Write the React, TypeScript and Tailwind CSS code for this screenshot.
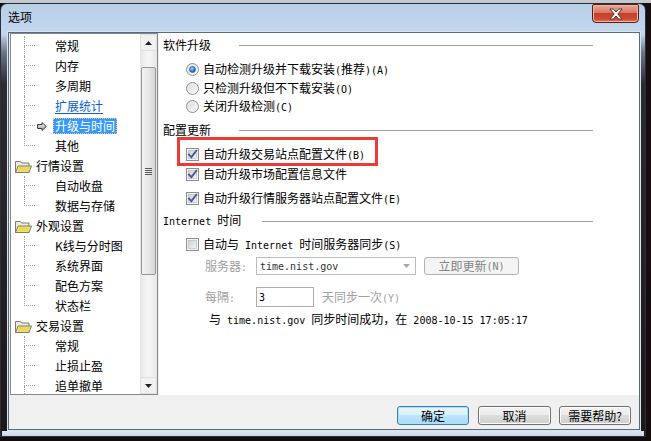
import React from "react";

const M = "font-['DejaVu_Sans_Mono'] text-[10px]";

function Folder() {
  return (
    <svg width="17" height="13" viewBox="0 0 17 13" className="shrink-0">
      <path d="M0.5 1.5h5l1.2 1.5h7.3v9.5H0.5z" fill="#ecebe0" stroke="#7d7d6c" />
      <path d="M0.5 12.5l2.6-6.5h13.4l-2.6 6.5z" fill="#f4e46e" stroke="#7d7d6c" />
      <path d="M4 8h10M3.4 10h10" stroke="#d8c440" strokeWidth="0.8" />
    </svg>
  );
}

function Arrow() {
  return (
    <svg width="10" height="9" viewBox="0 0 10 9" className="shrink-0">
      <defs>
        <linearGradient id="arrg" x1="0" y1="0" x2="0" y2="1">
          <stop offset="0" stopColor="#f4f4f4" />
          <stop offset="1" stopColor="#9a9a9a" />
        </linearGradient>
      </defs>
      <path d="M0.5 2.5h4.5v-2l4.3 4-4.3 4v-2h-4.5z" fill="url(#arrg)" stroke="#3c3c3c" />
    </svg>
  );
}

function Radio({ checked, id }: { checked?: boolean; id: string }) {
  return (
    <svg width="13" height="13" viewBox="0 0 13 13" className="shrink-0">
      <defs>
        <linearGradient id={`rb${id}`} x1="0" y1="0" x2="1" y2="1">
          <stop offset="0" stopColor="#d6d6d6" />
          <stop offset="1" stopColor="#fdfdfd" />
        </linearGradient>
        <radialGradient id={`rd${id}`} cx="0.4" cy="0.35" r="0.7">
          <stop offset="0" stopColor="#b5ddfb" />
          <stop offset="0.5" stopColor="#3d8ee0" />
          <stop offset="1" stopColor="#12539e" />
        </radialGradient>
      </defs>
      <circle cx="6.5" cy="6.5" r="6" fill={`url(#rb${id})`} stroke="#8e8f8f" />
      <circle cx="6.5" cy="6.5" r="4.5" fill="none" stroke="#f4f4f4" strokeWidth="0.8" />
      {checked && <circle cx="6.5" cy="6.5" r="3" fill={`url(#rd${id})`} stroke="#1b4f8e" strokeWidth="0.6" />}
    </svg>
  );
}

function Check({ checked, id }: { checked?: boolean; id: string }) {
  return (
    <svg width="13" height="13" viewBox="0 0 13 13" className="shrink-0">
      <defs>
        <linearGradient id={`cb${id}`} x1="0" y1="0" x2="1" y2="1">
          <stop offset="0" stopColor="#cbcfd5" />
          <stop offset="1" stopColor="#f6f6f6" />
        </linearGradient>
      </defs>
      <rect x="0.5" y="0.5" width="12" height="12" fill="#f4f4f4" stroke="#8e8f8f" />
      <rect x="2.5" y="2.5" width="8" height="8" fill={`url(#cb${id})`} stroke="#b5b9bf" strokeWidth="0.6" />
      {checked && (
        <path d="M3 6.6 L5.4 9.2 L10.3 2.8" fill="none" stroke="#4a5a94" strokeWidth="1.9" strokeLinecap="square" />
      )}
    </svg>
  );
}

type TreeItem = {
  label: string;
  kind: "parent" | "child";
  last?: boolean;
  selected?: boolean;
  link?: boolean;
};

const tree: TreeItem[] = [
  { label: "常规", kind: "child" },
  { label: "内存", kind: "child" },
  { label: "多周期", kind: "child" },
  { label: "扩展统计", kind: "child", link: true },
  { label: "升级与时间", kind: "child", selected: true },
  { label: "其他", kind: "child", last: true },
  { label: "行情设置", kind: "parent" },
  { label: "自动收盘", kind: "child" },
  { label: "数据与存储", kind: "child", last: true },
  { label: "外观设置", kind: "parent" },
  { label: "K线与分时图", kind: "child" },
  { label: "系统界面", kind: "child" },
  { label: "配色方案", kind: "child" },
  { label: "状态栏", kind: "child", last: true },
  { label: "交易设置", kind: "parent" },
  { label: "常规", kind: "child" },
  { label: "止损止盈", kind: "child" },
  { label: "追单撤单", kind: "child" },
];

function TreeRow({ item }: { item: TreeItem }) {
  if (item.kind === "parent") {
    return (
      <div className="flex h-[20px] shrink-0 items-center pl-[4px]">
        <Folder />
        <span className="ml-[4px] leading-[20px] text-black">{item.label}</span>
      </div>
    );
  }
  return (
    <div className="flex h-[20px] shrink-0">
      <div className="w-[13px] shrink-0" />
      <div className="flex w-[11px] shrink-0 flex-col">
        <div className="h-[10px] border-b border-l border-dotted border-[#a0a0a0]" />
        <div className={item.last ? "h-[10px]" : "h-[10px] border-l border-dotted border-[#a0a0a0]"} />
      </div>
      <div className="flex w-[18px] shrink-0 items-center pl-[2px]">{item.selected && <Arrow />}</div>
      <div className="flex items-center">
        {item.selected ? (
          <span className="h-[16px] border border-dotted border-[#f3c26a] bg-[#3399ff] px-[1px] leading-[14px] text-white">
            {item.label}
          </span>
        ) : (
          <span
            className={
              item.link
                ? "border border-transparent px-[1px] leading-[20px] text-[#0a5ed1] underline underline-offset-2"
                : "border border-transparent px-[1px] leading-[20px] text-black"
            }
          >
            {item.label}
          </span>
        )}
      </div>
    </div>
  );
}

function ScrollBar() {
  return (
    <div className="flex w-[17px] shrink-0 flex-col bg-[linear-gradient(to_right,#e6e6e6,#f4f4f4_40%,#f4f4f4_60%,#e6e6e6)]">
      <div className="flex h-[17px] shrink-0 items-center justify-center rounded-[2px] border border-[#e0e0e0] bg-[#f1f1f1]">
        <svg width="7" height="4" viewBox="0 0 7 4">
          <path d="M0 4 L3.5 0 L7 4z" fill="#222" />
        </svg>
      </div>
      <div className="h-[16px] shrink-0" />
      <div className="mx-[1px] flex h-[208px] shrink-0 flex-col items-center justify-center rounded-[2px] border border-[#979797] bg-[linear-gradient(to_right,#f3f3f3,#e8e8e8_50%,#d6d6d6)]">
        <div className="flex flex-col gap-[1px]">
          <div className="h-px w-[7px] bg-[#5a5a5a]" />
          <div className="h-px w-[7px] bg-[#5a5a5a]" />
          <div className="h-px w-[7px] bg-[#5a5a5a]" />
          <div className="h-px w-[7px] bg-[#5a5a5a]" />
        </div>
      </div>
      <div className="flex-1" />
      <div className="flex h-[17px] shrink-0 items-center justify-center rounded-[2px] border border-[#e0e0e0] bg-[#f1f1f1]">
        <svg width="7" height="4" viewBox="0 0 7 4">
          <path d="M0 0 L3.5 4 L7 0z" fill="#222" />
        </svg>
      </div>
    </div>
  );
}

function Header({ children, gap }: { children: React.ReactNode; gap: string }) {
  return (
    <div className="flex h-[20px] shrink-0 items-center pl-[4px]">
      <span className="whitespace-nowrap leading-[20px] text-black">{children}</span>
      <div className={`${gap} mr-[46px] h-px flex-1 bg-[#a0a0a0]`} />
    </div>
  );
}

function WinButton({ children, primary, w }: { children: React.ReactNode; primary?: boolean; w: string }) {
  return (
    <div
      className={
        primary
          ? `${w} flex h-[19px] items-center justify-center rounded-[3px] border border-[#3c7fb1] bg-[linear-gradient(to_bottom,#eaf6fd,#d9f0fc_50%,#bee6fd_50%,#a7d9f5)] text-black shadow-[inset_0_0_0_1px_#a8e2fa]`
          : `${w} flex h-[19px] items-center justify-center rounded-[3px] border border-[#707070] bg-[linear-gradient(to_bottom,#f2f2f2,#ebebeb_50%,#dddddd_50%,#cfcfcf)] text-black shadow-[inset_0_0_0_1px_#fcfcfc]`
      }
    >
      {children}
    </div>
  );
}

export default function App() {
  return (
    <div className="h-[441px] w-[651px] overflow-hidden bg-[linear-gradient(to_bottom,#c4c9d0_0px,#c4c9d0_3px,#170d0f_3px,#140b0d_100%)] font-['Noto_Sans_CJK_SC',sans-serif] text-[12px]">
      <div className="mt-[3px] flex h-[434px] w-[646px] flex-col rounded-t-[7px] border border-[#27303c] bg-[linear-gradient(to_bottom,#b8cfe8_0px,#c3d7ee_30px,#6d7685_48px,#2d2a30_80px,#1d1719_100%)]">
        {/* title bar */}
        <div className="flex h-[28px] shrink-0 items-start">
          <span className="ml-[7px] mt-[3px] leading-[20px] text-black">选项</span>
          <div className="ml-auto mr-[6px] flex h-[19px] w-[47px] items-center justify-center rounded-b-[4px] rounded-t-[2px] border border-[#5a1b12] bg-[linear-gradient(to_bottom,#e9a899,#d67a63_45%,#c3402a_50%,#cf4a30_80%,#e07050)] shadow-[inset_0_0_0_1px_#eeb8a8]">
            <svg width="14" height="12" viewBox="0 0 14 12">
              <path
                d="M1 1 H4.5 L7 4 L9.5 1 H13 L8.8 6 L13 11 H9.5 L7 8 L4.5 11 H1 L5.2 6 Z"
                fill="#ffffff"
                stroke="#4a2a26"
                strokeWidth="0.9"
                strokeLinejoin="round"
              />
            </svg>
          </div>
        </div>

        {/* client */}
        <div className="ml-[7px] flex h-[398px] w-[632px] shrink-0 flex-col border border-[#596a80] bg-[#f0f0f0] shadow-[0_0_0_1px_#d9e4ef]">
          <div className="flex h-[362px] shrink-0">
            {/* tree */}
            <div className="ml-[1px] flex h-[362px] w-[148px] shrink-0 border border-[#828790] bg-white">
              <div className="flex flex-1 flex-col overflow-hidden pt-[2px]">
                {tree.map((it, i) => (
                  <TreeRow key={i} item={it} />
                ))}
              </div>
              <ScrollBar />
            </div>
            {/* right pane */}
            <div className="relative ml-[1px] flex w-[480px] shrink-0 flex-col bg-white">
              <div className="mt-[2px]">
                <Header gap="ml-[28px]">软件升级</Header>
              </div>
              <div className="mt-[5px] flex h-[18px] shrink-0 items-center pl-[27px]">
                <Radio checked id="1" />
                <span className="ml-[4px] whitespace-nowrap">
                  自动检测升级并下载安装<span className={M}>(</span>推荐<span className={M}>)(A)</span>
                </span>
              </div>
              <div className="mt-[1px] flex h-[18px] shrink-0 items-center pl-[27px]">
                <Radio id="2" />
                <span className="ml-[4px] whitespace-nowrap">
                  只检测升级但不下载安装<span className={M}>(O)</span>
                </span>
              </div>
              <div className="flex h-[18px] shrink-0 items-center pl-[27px]">
                <Radio id="3" />
                <span className="ml-[4px] whitespace-nowrap">
                  关闭升级检测<span className={M}>(C)</span>
                </span>
              </div>

              <div className="mt-[5px]">
                <Header gap="ml-[28px]">配置更新</Header>
              </div>
              <div className="mt-[5px] flex h-[18px] shrink-0 items-center pl-[27px]">
                <Check checked id="1" />
                <span className="ml-[4px] whitespace-nowrap">
                  自动升级交易站点配置文件<span className={M}>(B)</span>
                </span>
              </div>
              <div className="mt-[2px] flex h-[18px] shrink-0 items-center pl-[27px]">
                <Check checked id="2" />
                <span className="ml-[4px] whitespace-nowrap">自动升级市场配置信息文件</span>
              </div>
              <div className="mt-[6px] flex h-[18px] shrink-0 items-center pl-[27px]">
                <Check checked id="3" />
                <span className="ml-[4px] whitespace-nowrap">
                  自动升级行情服务器站点配置文件<span className={M}>(E)</span>
                </span>
              </div>

              <div className="mt-[4px]">
                <Header gap="ml-[21px]">
                  <span className={M}>Internet </span>时间
                </Header>
              </div>
              <div className="mt-[4px] flex h-[18px] shrink-0 items-center pl-[27px]">
                <Check id="4" />
                <span className="ml-[4px] whitespace-nowrap">
                  自动与<span className={M}> Internet </span>时间服务器同步<span className={M}>(S)</span>
                </span>
              </div>
              <div className="mt-[4px] flex h-[18px] shrink-0 items-center pl-[46px]">
                <span className="w-[51px] shrink-0 text-[#a0a0a0]">
                  服务器<span className={M}>:</span>
                </span>
                <div className="flex h-[18px] w-[160px] shrink-0 items-center border border-[#bcbcbc] bg-white pl-[3px] pr-[5px]">
                  <span className={`${M} text-[#333]`}>time.nist.gov</span>
                  <svg width="7" height="4" viewBox="0 0 7 4" className="ml-auto">
                    <path d="M0 0 L3.5 4 L7 0z" fill="#a8a8a8" />
                  </svg>
                </div>
                <div className="ml-[8px] flex h-[18px] w-[95px] shrink-0 items-center justify-center rounded-[3px] border border-[#adb2b5] bg-[#f4f4f4] text-[#838383]">
                  立即更新<span className={M}>(N)</span>
                </div>
              </div>
              <div className="mt-[12px] flex h-[20px] shrink-0 items-center pl-[46px]">
                <span className="w-[51px] shrink-0 text-[#a0a0a0]">
                  每隔<span className={M}>:</span>
                </span>
                <div className="flex h-[20px] w-[58px] shrink-0 items-center border border-[#abadb3] bg-white pl-[2px]">
                  <span className={`${M} text-black`}>3</span>
                </div>
                <span className="ml-[8px] whitespace-nowrap text-[#a0a0a0]">
                  天同步一次<span className={M}>(Y)</span>
                </span>
              </div>
              <div className="mt-[3px] flex h-[18px] shrink-0 items-center pl-[50px]">
                <span className="whitespace-nowrap text-black">
                  与<span className={M}> time.nist.gov </span>同步时间成功，在<span className={M}> 2008-10-15 17:05:17</span>
                </span>
              </div>

              {/* red annotation box */}
              <div className="absolute left-[18px] top-[104px] h-[29px] w-[201px] border-[3px] border-[#ee3a36]" />
            </div>
          </div>

          {/* bottom buttons */}
          <div className="flex flex-1 items-start pt-[11px]">
            <div className="ml-[388px]">
              <WinButton primary w="w-[72px]">确定</WinButton>
            </div>
            <div className="ml-[9px]">
              <WinButton w="w-[73px]">取消</WinButton>
            </div>
            <div className="ml-[8px]">
              <WinButton w="w-[72px]">需要帮助?</WinButton>
            </div>
          </div>
        </div>

        {/* bottom frame */}
        <div className="mx-[1px] mt-[1px] flex-1 bg-[linear-gradient(to_bottom,#dbe6f2,#c7d8ea)]" />
      </div>
    </div>
  );
}
